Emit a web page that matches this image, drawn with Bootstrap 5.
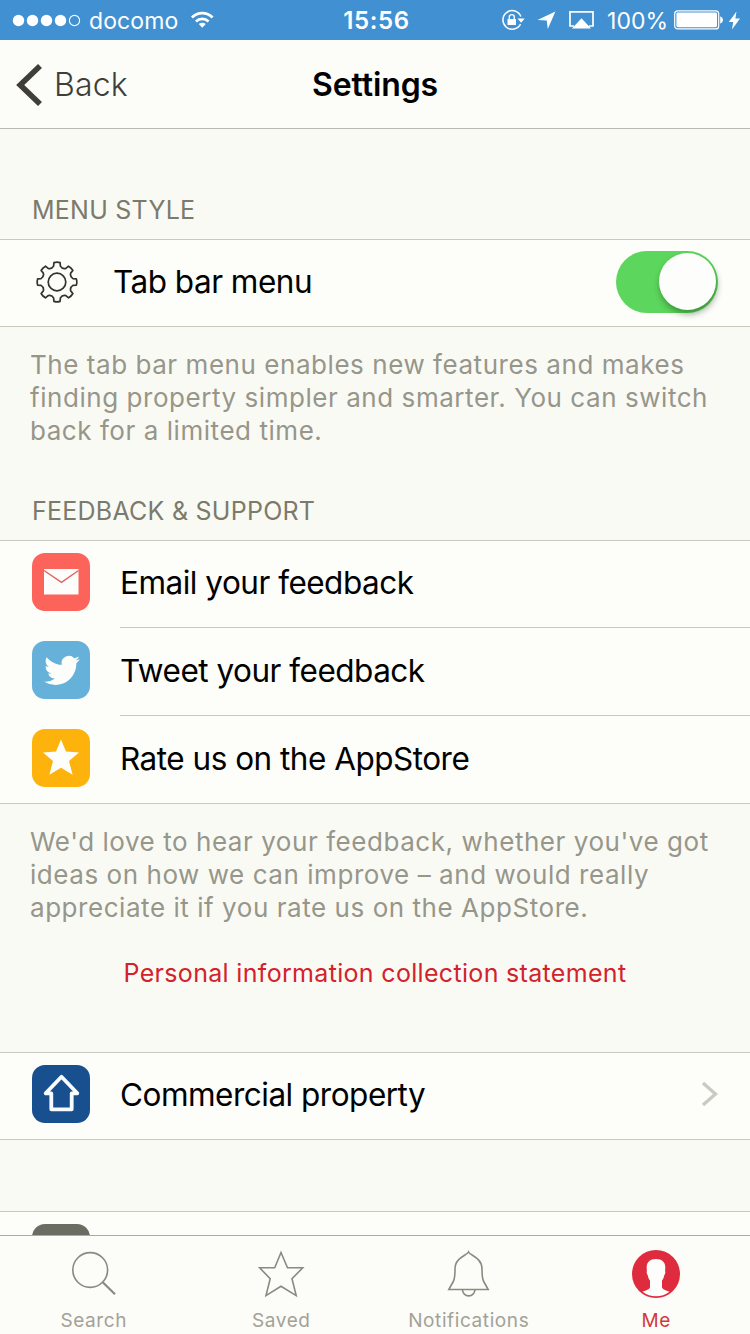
<!DOCTYPE html>
<html lang="en">
<head>
<meta charset="utf-8">
<meta name="viewport" content="width=device-width, initial-scale=1">
<title>Settings</title>
<link href="https://cdn.jsdelivr.net/npm/bootstrap@5.3.0/dist/css/bootstrap.min.css" rel="stylesheet">
<style>
  body{font-family:Inter,"Liberation Sans",sans-serif;background:#fafaf5;color:#000;height:1334px;overflow:hidden}
  svg{display:block;flex:none}
  .statusbar{height:40px;background:#4190d2;color:#fff;font-size:23px;line-height:40px;padding:0 9px 0 12px}
  .statusbar .side{flex:1 1 0}
  .statusbar span,.clock{padding-top:1px}
  .carrier{margin-left:7px;letter-spacing:.1px}
  .clock{font-weight:600;font-size:24px;letter-spacing:.6px}
  .topnav{height:89px;background:#fcfcf8;border-bottom:1px solid #b9b9b0;font-size:32px;line-height:88px;padding:0 16px}
  .topnav .side{flex:1 1 0}
  .back{color:#3f3f38;text-decoration:none;font-weight:300;letter-spacing:.2px}
  .back span,.page-title{padding-top:1px}
  .page-title{font-size:32px;font-weight:600;letter-spacing:-.1px;line-height:88px}
  .scroller{height:1106px;overflow:hidden;flex:none}
  .section-title{font-size:25px;font-weight:400;line-height:30px;color:#7b7b6c;padding-left:32px;margin:0;letter-spacing:.25px}
  .group{background:#fdfdfa;border-top:1px solid #c9c9bd;border-bottom:1px solid #c9c9bd;border-radius:0}
  .entry{height:87px;padding:8px 32px 12px;background:none;border:0;color:#000;font-size:31.5px;line-height:40px;letter-spacing:-.5px;position:relative}
  .entry.first-row{padding:8px 32px 13px}
  .entry.mid-row{height:88px}
  .entry.last-row{padding-bottom:11px}
  .entry.solo{height:86px}
  .entry .label{margin-left:30px;padding-top:2px}
  .mid-row::before,.last-row::before{content:"";position:absolute;left:120px;right:0;top:-1px;height:1px;background:#c9c9bd}
  .tile{width:58px;height:58px;border-radius:13px;flex:none}
  .note{font-size:26px;font-weight:400;line-height:33px;color:#96968a;margin:0;padding-left:30px;white-space:nowrap;letter-spacing:.55px}
  .statement{font-size:25px;line-height:30px;color:#d3222b;text-decoration:none;letter-spacing:.32px}
  .switch{width:102px;height:62px;border-radius:31px;background:#5cd65c;padding:2px 2px 2px 43px}
  .knob{width:57px;height:57px;border-radius:50%;background:#fdfdfb;box-shadow:1px 4px 6px rgba(0,50,0,.4)}
  .tabs{height:99px;border-top:1px solid #acaca0;background:#fcfcf8;font-size:19px;line-height:24px}
  .tabs a{width:187.5px;color:#a2a297;text-decoration:none;padding-top:14px;font-weight:400;letter-spacing:.6px}
  .tabs svg{margin-bottom:11px}
  .tabs a.on{color:#d23a3c}
</style>
</head>
<body class="d-flex flex-column">
<header class="statusbar d-flex align-items-center">
  <div class="side d-flex align-items-center">
    <svg width="70" height="16" viewBox="0 0 70 16"><g fill="#fff"><circle cx="6.5" cy="8.5" r="5.7"/><circle cx="20.5" cy="8.5" r="5.7"/><circle cx="34.5" cy="8.5" r="5.7"/><circle cx="48.5" cy="8.5" r="5.7"/></g><circle cx="62.5" cy="8.5" r="5.1" fill="none" stroke="#fff" stroke-width="1.1"/></svg>
    <span class="carrier">docomo</span>
    <svg class="ms-2 ps-1" width="32" height="22" viewBox="-1 -.5 32 22"><g fill="none" stroke="#fff" stroke-width="3.2"><path d="M1.200 7.600a16.500 16.500 0 0 1 23.600 0"/><path d="M5.800 12.100a10.300 10.300 0 0 1 14.400 0"/></g><path d="M13 19.300l-4-4.100a5.800 5.800 0 0 1 8 0z" fill="#fff"/></svg>
  </div>
  <div class="clock">15:56</div>
  <div class="side d-flex align-items-center justify-content-end">
    <svg width="24" height="22" viewBox="0 0 24 22"><path d="M19.500 15.200A9.300 9.300 0 1 1 19.900 7.600" fill="none" stroke="#fff" stroke-width="1.500"/><path d="M16.500 9.500h7.200l-3.600 4.300z" fill="#fff"/><rect x="6.500" y="10" width="8.500" height="6" rx=".6" fill="#fff"/><path d="M8.300 10V8.100a2.500 2.500 0 0 1 5 0V10" fill="none" stroke="#fff" stroke-width="1.400"/></svg>
    <svg style="margin-left:12px" width="19" height="19" viewBox="0 0 19 19"><path d="M18.400.5L10.800 18 9.700 9.400.5 9z" fill="#fff"/></svg>
    <svg style="margin-left:13px" width="25" height="20" viewBox="0 0 25 20"><path d="M5 16H1V1.800h23V16h-4" fill="none" stroke="#fff" stroke-width="1.700"/><path d="M12.500 8.200L22 18.600H3z" fill="#fff"/></svg>
    <span style="margin-left:13px">100%</span>
    <svg style="margin-left:6px" width="49" height="20" viewBox="0 0 49 20"><rect x=".7" y=".9" width="44" height="18" rx="3" fill="none" stroke="#fff" stroke-width="1.200"/><rect x="2.400" y="2.600" width="40.600" height="14.600" rx="1.400" fill="#fff"/><path d="M46.200 6.300q2.800 1 2.800 3.700t-2.800 3.700z" fill="#fff"/></svg>
    <svg style="margin-left:5px" width="13" height="19" viewBox="0 0 13 19"><path d="M8.500.5L.8 11h4.400L4 18.500 12 7.600H7.400z" fill="#fff"/></svg>
  </div>
</header>
<nav class="topnav d-flex">
  <div class="side"><a href="#" class="back d-flex align-items-center"><svg width="27" height="42" viewBox="0 0 27 42"><path d="M24 2L4.200 21 24 40" fill="none" stroke="#3f3f38" stroke-width="5.600"/></svg><span style="margin-left:11px">Back</span></a></div>
  <h1 class="page-title m-0">Settings</h1>
  <div class="side"></div>
</nav>
<main class="scroller">
  <h2 class="section-title" style="margin-top:66px;margin-bottom:14px">MENU STYLE</h2>
  <div class="list-group group">
    <div class="list-group-item entry solo d-flex align-items-center" style="padding-bottom:10px">
      <svg style="margin-left:4px" width="42" height="42" viewBox="-21 -21 42 42"><g fill="none" stroke="#33332c" stroke-width="1.700" stroke-linejoin="round"><circle r="8.800"/><path id="cog"/></g></svg>
      <span class="label" style="margin-left:35px;padding-top:0">Tab bar menu</span>
      <div class="switch ms-auto"><div class="knob"></div></div>
    </div>
  </div>
  <p class="note" style="margin-top:21px">The tab bar menu enables new features and makes<br>finding property simpler and smarter. You can switch<br>back for a limited time.</p>
  <h2 class="section-title" style="margin-top:49px;margin-bottom:14px">FEEDBACK &amp; SUPPORT</h2>
  <div class="list-group group">
    <a href="#" class="list-group-item entry first-row d-flex align-items-center">
      <svg class="tile" style="background:#fb635b" viewBox="0 0 58 58"><rect x="12" y="16" width="34.500" height="25.500" fill="#fdfdfb"/><path d="M12 17.500l17.500 11.800 17-11.800" fill="none" stroke="#e26460" stroke-width="1.500"/></svg>
      <span class="label">Email your feedback</span>
    </a>
    <a href="#" class="list-group-item entry mid-row d-flex align-items-center">
      <svg class="tile" style="background:#65b1da" viewBox="0 0 58 58"><path transform="translate(12.200 11.500) scale(1.490)" fill="#fdfdfb" d="M23.953 4.570a10 10 0 0 1-2.825.775 4.958 4.958 0 0 0 2.163-2.723c-.951.555-2.005.959-3.127 1.184a4.920 4.920 0 0 0-8.384 4.482C7.690 8.095 4.067 6.130 1.640 3.162a4.822 4.822 0 0 0-.666 2.475c0 1.710.870 3.213 2.188 4.096a4.904 4.904 0 0 1-2.228-.616v.060a4.923 4.923 0 0 0 3.946 4.827 4.996 4.996 0 0 1-2.212.085 4.936 4.936 0 0 0 4.604 3.417 9.867 9.867 0 0 1-6.102 2.105c-.390 0-.779-.023-1.170-.067a13.995 13.995 0 0 0 7.557 2.209c9.053 0 13.998-7.496 13.998-13.985 0-.210 0-.420-.015-.630A9.935 9.935 0 0 0 24 4.590z"/></svg>
      <span class="label">Tweet your feedback</span>
    </a>
    <a href="#" class="list-group-item entry last-row d-flex align-items-center">
      <svg class="tile" style="background:#fdb30c" viewBox="0 0 58 58"><path d="M29 10.500l5 12 13 .9-10 8.600 3.600 13.800L29 38.800l-11.600 7L21 32l-10-8.600 13-.9z" fill="#fdfdfb"/></svg>
      <span class="label">Rate us on the AppStore</span>
    </a>
  </div>
  <p class="note" style="margin-top:21px">We'd love to hear your feedback, whether you've got<br>ideas on how we can improve – and would really<br>appreciate it if you rate us on the AppStore.</p>
  <div class="text-center" style="margin-top:34px;height:94px"><a href="#" class="statement d-inline-block align-top">Personal information collection statement</a></div>
  <div class="list-group group">
    <a href="#" class="list-group-item entry solo d-flex align-items-center">
      <svg class="tile" style="background:#18508f" viewBox="0 0 58 58"><path d="M29.500 11.800L13.700 28.300h5.600v16h20.400v-16h5.600z" fill="none" stroke="#f8fcff" stroke-width="3.800" stroke-linejoin="round"/></svg>
      <span class="label">Commercial property</span>
      <svg class="ms-auto" width="17" height="26" viewBox="0 0 17 26"><path d="M2 2L14.500 13 2 24" fill="none" stroke="#cacac2" stroke-width="3.400"/></svg>
    </a>
  </div>
  <div class="list-group group" style="margin-top:71px">
    <div class="list-group-item entry d-flex align-items-start" style="padding-top:12px"><span class="tile" style="background:#6c6d62"></span></div>
  </div>
</main>
<footer class="tabs d-flex flex-shrink-0">
  <a href="#" class="d-flex flex-column align-items-center"><svg width="48" height="48" viewBox="0 0 48 48"><g fill="none" stroke="#8a8a80" stroke-width="1.600"><circle cx="20.200" cy="20" r="17.400"/><path d="M32.500 32L45 44.200" stroke-width="2.200"/></g></svg>Search</a>
  <a href="#" class="d-flex flex-column align-items-center"><svg width="48" height="48" viewBox="0 0 48 48"><path d="M24 2.500l6.500 15.300h15.200L35 28.800l4.200 16.800L24 36.200 9 45.600l4.200-16.800L2.700 17.800h15z" fill="none" stroke="#8a8a80" stroke-width="1.600"/></svg>Saved</a>
  <a href="#" class="d-flex flex-column align-items-center"><svg width="48" height="48" viewBox="0 0 48 48"><g fill="none" stroke="#8a8a80" stroke-width="1.600"><path d="M23.500 2c-1.500 3.500-13.500 5.500-13.500 17 0 7 0 9.500-1.700 12.500L3.800 39.500h39.400l-4.500-8c-1.700-3-1.700-5.500-1.700-12.500C37 7.500 25 5.500 23.500 2z"/><path d="M17.500 39.700a6.200 6.200 0 0 0 12.400 0"/></g></svg>Notifications</a>
  <a href="#" class="on d-flex flex-column align-items-center"><svg width="48" height="48" viewBox="0 0 48 48"><circle cx="24" cy="24" r="24" fill="#df2b3e"/><path d="M24 9c-6 0-9.300 3-9.300 8.500 0 2 .3 3.200 0 4.500s.9 2.500 1.200 4c.4 2 1 3.200 2.100 4.500v6.500c0 2.500-4 3.200-7.500 4.800a22.500 22.500 0 0 0 27 0C34 40.200 30 39.500 30 37V30.500c1.100-1.300 1.700-2.500 2.100-4.500.3-1.500 1.500-2.700 1.200-4s0-2.500 0-4.500C33.300 12 30 9 24 9z" fill="#fdfdfb"/></svg>Me</a>
</footer>
<script>
  // Eight-tooth gear outline
  const n = 8, p = (r, deg) => { const a = deg * Math.PI / 180; return (r * Math.sin(a)).toFixed(2) + ' ' + (-r * Math.cos(a)).toFixed(2); };
  let d = '';
  for (let i = 0; i < n; i++) {
    const c = i * 360 / n;
    d += (i ? 'L' : 'M') + p(16.3, c - 12) + 'L' + p(19.6, c - 9) + 'Q' + p(20.3, c) + ' ' + p(19.6, c + 9) + 'L' + p(16.3, c + 12) + 'Q' + p(13.8, c + 22.5) + ' ' + p(16.3, c + 33);
  }
  document.getElementById('cog').setAttribute('d', d + 'Z');
</script>
<script src="https://cdn.jsdelivr.net/npm/bootstrap@5.3.0/dist/js/bootstrap.bundle.min.js"></script>
</body>
</html>
